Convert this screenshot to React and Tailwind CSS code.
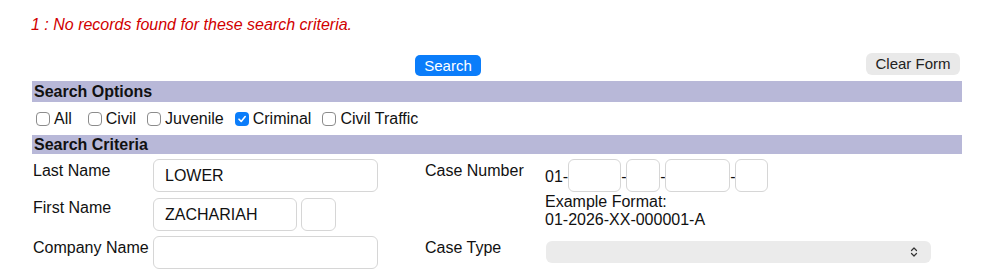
import React from 'react';

// Search form with error message, options bar and criteria grid

function Box({ checked }) {
  if (checked) {
    return (
      <span className="inline-flex items-center justify-center w-[14px] h-[14px] rounded-[4px] bg-[#0b7dfa]">
        <svg width="10" height="10" viewBox="0 0 10 10" fill="none">
          <path d="M2 5.2 L4.2 7.4 L8.2 2.6" stroke="white" strokeWidth="1.6" strokeLinecap="round" strokeLinejoin="round" />
        </svg>
      </span>
    );
  }
  return <span className="inline-block w-[14px] h-[14px] rounded-[4px] border border-[#8c8c8c] bg-white" />;
}

function Option({ label, checked, className }) {
  return (
    <label className={`flex items-center ${className}`}>
      <Box checked={checked} />
      <span className="ml-[4px]">{label}</span>
    </label>
  );
}

function Field({ value, className }) {
  return (
    <div className={`h-[33px] border border-[#d6d6d6] rounded-[6px] bg-white pl-[11px] flex items-center text-[16px] ${className}`}>
      {value}
    </div>
  );
}

export default function App() {
  return (
    <div className="w-[994px] h-[276px] bg-white text-[#111] font-['Liberation_Sans',Arial,sans-serif] overflow-hidden">
      <div className="ml-8 w-[930px]">
        <p className="pt-[16px] -ml-px text-[16px] leading-[18px] italic text-[#d10000]">
          1 : No records found for these search criteria.
        </p>

        <div className="mt-[19px] h-[28px] flex items-start">
          <button className="ml-[383px] mt-[2px] h-[21px] w-[66px] rounded-[5px] bg-[#0b7dfa] text-white text-[15px] leading-[21px]">
            Search
          </button>
          <button className="ml-auto mr-[2px] h-[22px] w-[94px] rounded-[6px] bg-[#e9e9e9] text-[#222] text-[15px] leading-[22px]">
            Clear Form
          </button>
        </div>

        <div className="h-[21px] bg-[#b8b8d8] pl-[2px] text-[16px] leading-[21px] font-bold">Search Options</div>
        <div className="h-[33px] flex items-center text-[16px] pl-[4px]">
          <Option label="All" />
          <Option label="Civil" className="ml-[16px]" />
          <Option label="Juvenile" className="ml-[11px]" />
          <Option label="Criminal" checked className="ml-[11px]" />
          <Option label="Civil Traffic" className="ml-[11px]" />
        </div>
        <div className="h-[19px] bg-[#b8b8d8] pl-[2px] text-[16px] leading-[19px] font-bold">Search Criteria</div>

        <div className="grid grid-cols-[121px_272px_120px_1fr] text-[16px] leading-[18px]">
          {/* row 1 */}
          <div className="pl-[1px] mt-[8px]">Last Name</div>
          <div className="mt-[5px]"><Field value="LOWER" className="w-[225px]" /></div>
          <div className="mt-[8px]">Case Number</div>
          <div className="mt-[5px] flex items-center">
            <span className="mt-[2px]">01-</span>
            <Field className="w-[53px]" />
            <span className="mt-[2px] w-[5px]">-</span>
            <Field className="w-[34px]" />
            <span className="mt-[2px] w-[5px]">-</span>
            <Field className="w-[65px]" />
            <span className="mt-[2px] w-[5px]">-</span>
            <Field className="w-[33px]" />
          </div>

          {/* row 2 */}
          <div className="pl-[1px] mt-[7px]">First Name</div>
          <div className="mt-[6px] flex gap-[4px]">
            <Field value="ZACHARIAH" className="w-[144px]" />
            <Field className="w-[35px]" />
          </div>
          <div />
          <div className="mt-[1px]">
            <div>Example Format:</div>
            <div>01-2026-XX-000001-A</div>
          </div>

          {/* row 3 */}
          <div className="pl-[1px] mt-[8px]">Company Name</div>
          <div className="mt-[5px]"><Field className="w-[225px]" /></div>
          <div className="mt-[8px]">Case Type</div>
          <div className="mt-[10px]">
            <div className="ml-[1px] h-[22px] w-[385px] rounded-[6px] bg-[#ebebeb] flex items-center justify-end pr-[13px]">
              <svg width="8" height="12" viewBox="0 0 8 12" fill="none">
                <path d="M1.5 4.5 L4 2 L6.5 4.5" stroke="#333" strokeWidth="1.2" strokeLinecap="round" strokeLinejoin="round" />
                <path d="M1.5 7.5 L4 10 L6.5 7.5" stroke="#333" strokeWidth="1.2" strokeLinecap="round" strokeLinejoin="round" />
              </svg>
            </div>
          </div>
        </div>
      </div>
    </div>
  );
}
